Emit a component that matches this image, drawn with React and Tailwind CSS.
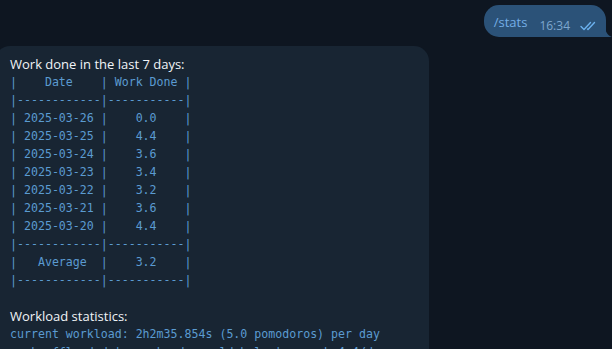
import React from 'react'

const tableLines = [
  '|    Date    | Work Done |',
  '|------------|-----------|',
  '| 2025-03-26 |    0.0    |',
  '| 2025-03-25 |    4.4    |',
  '| 2025-03-24 |    3.6    |',
  '| 2025-03-23 |    3.4    |',
  '| 2025-03-22 |    3.2    |',
  '| 2025-03-21 |    3.6    |',
  '| 2025-03-20 |    4.4    |',
  '|------------|-----------|',
  '|   Average  |    3.2    |',
  '|------------|-----------|',
]

const Checks = () => (
  <svg width="17" height="10" viewBox="0 0 17 10" fill="none" stroke="#6cb1ee" strokeWidth="1.4" strokeLinecap="round" strokeLinejoin="round">
    <path d="M1 5.5 L4 8.5 L10.5 1.5" />
    <path d="M7.5 8 L8 8.5 L14.5 1.5" />
  </svg>
)

const OutgoingBubble = () => (
  <div className="flex justify-end pt-[5px] pr-[6px]">
    <div className="relative flex items-end h-[32px] bg-[#2b5278] rounded-[15px] rounded-br-none pl-[10px] pr-[9px]">
      <span className="text-[13px] leading-[18px] text-[#74aee6] mb-[6px]">/stats</span>
      <span className="ml-[12px] text-[12px] leading-[16px] text-[#7ea7cf] mb-[3px]">16:34</span>
      <span className="ml-[10px] mb-[6px]"><Checks /></span>
      <svg className="absolute bottom-0 right-[-6px]" width="7" height="12" viewBox="0 0 7 12">
        <path d="M0 0 C0 6 2 10 7 12 L0 12 Z" fill="#2b5278" />
      </svg>
    </div>
  </div>
)

const IncomingBubble = () => (
  <div className="mt-[9px] -ml-[5px] w-[434px] flex-1 bg-[#182533] rounded-t-[15px] pt-[9px] pl-[15px]">
    <div className="text-[13px] leading-[18px] text-[#f1f4f7]">Work done in the last 7 days:</div>
    <pre className="font-['DejaVu_Sans_Mono',monospace] text-[11.6px] leading-[18px] text-[#5b9bd1]">
      {tableLines.join('\n')}
    </pre>
    <div className="h-[18px]" />
    <div className="text-[13px] leading-[18px] text-[#f1f4f7]">Workload statistics:</div>
    <pre className="font-['DejaVu_Sans_Mono',monospace] text-[11.6px] leading-[18px] text-[#5b9bd1]">
      {'current workload: 2h2m35.854s (5.0 pomodoros) per day\nwork offloaded to weekends would help to reach 4.4/day'}
    </pre>
  </div>
)

const App = () => {
  return (
    <div className="w-[612px] h-[349px] overflow-hidden bg-[#0e1621] flex flex-col font-['Open_Sans',sans-serif]">
      <OutgoingBubble />
      <IncomingBubble />
    </div>
  )
}

export default App
